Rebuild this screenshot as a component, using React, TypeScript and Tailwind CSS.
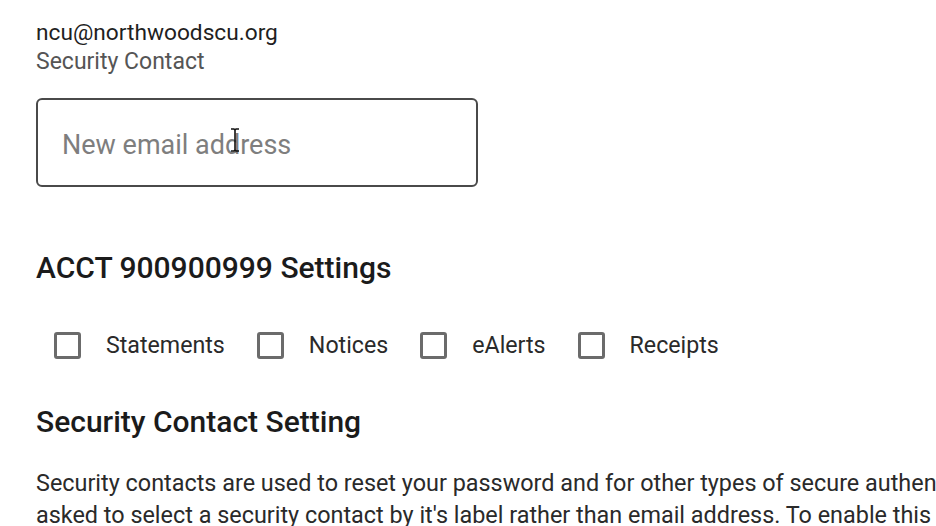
const OPTIONS = ['Statements', 'Notices', 'eAlerts', 'Receipts'];

export default function App() {
  return (
    <div className="h-[526px] w-[936px] overflow-hidden bg-white font-['Roboto',sans-serif] text-[#212121]">
      <div className="pl-[36px] pt-[18px]">
        {/* Current contact */}
        <div className="text-[22.7px] leading-[30px] text-[#1f1f1f]">ncu@northwoodscu.org</div>
        <div className="text-[23px] leading-[28px] text-[#555]">Security Contact</div>

        {/* New email input */}
        <div className="relative mt-[22px] w-[442px]">
          <input
            type="text"
            placeholder="New email address"
            className="h-[89px] w-full rounded-[6px] border-2 border-[#4a4a4a] px-[24px] pt-[5px] text-[27px] text-[#222] outline-none placeholder:text-[#7e7e7e]"
          />
          {/* mouse I-beam cursor */}
          <svg
            className="pointer-events-none absolute left-[194px] top-[30px]"
            width="10"
            height="24"
            viewBox="0 0 10 24"
          >
            <path d="M1 1h3l1 1 1-1h3M5 2v20M1 23h3l1-1 1 1h3" fill="none" stroke="#111" strokeWidth="1.6" />
          </svg>
        </div>

        {/* Account settings */}
        <h2 className="mt-[64px] text-[30px] font-medium leading-[34px] text-[#1b1b1b]">
          ACCT 900900999 Settings
        </h2>
        <div className="mt-[46px] flex items-center pl-[18px]">
          {OPTIONS.map((o) => (
            <label key={o} className="mr-[32px] flex items-center">
              <span className="h-[27px] w-[27px] rounded-[3px] border-[3px] border-[#6b6b6b]" />
              <span className="ml-[25px] text-[23.2px] leading-[28px] text-[#2a2a2a]">{o}</span>
            </label>
          ))}
        </div>

        {/* Security contact setting */}
        <h2 className="mt-[46px] text-[30px] font-medium leading-[34px] text-[#1b1b1b]">
          Security Contact Setting
        </h2>
        <p className="mt-[28px] whitespace-nowrap text-[23.4px] leading-[32px] text-[#2a2a2a]">
          Security contacts are used to reset your password and for other types of secure authentication. You may be
          <br />
          asked to select a security contact by it's label rather than email address. To enable this feature, give
          <br />
          your security contact a label.
        </p>
      </div>
    </div>
  );
}
